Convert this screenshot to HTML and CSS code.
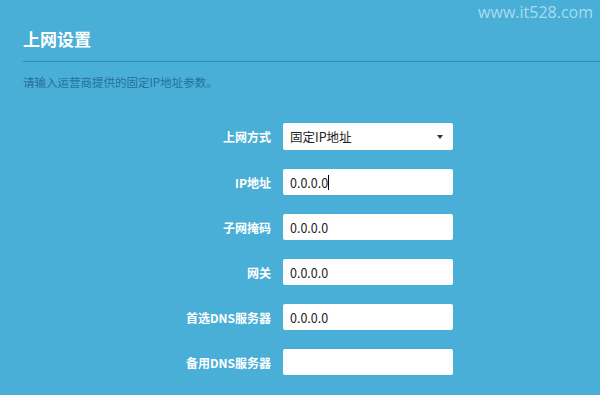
FILE: index.html
```html
<!DOCTYPE html>
<html lang="zh-CN">
<head>
	<title>上网设置</title>
	<meta charset="utf-8">
	<link rel="stylesheet" href="styles.css">
</head>
<body>
	<div class="watermark">www.it528.com</div>
	<div class="page">
		<h1 class="title">上网设置</h1>
		<div class="rule"></div>
		<p class="hint">请输入运营商提供的固定IP地址参数。</p>
		<div class="form">
			<label class="label">上网方式</label>
			<div class="select">
				<span>固定IP地址</span>
				<span class="arrow"></span>
			</div>
			<label class="label">IP地址</label>
			<div class="field">0.0.0.0<span class="caret"></span></div>
			<label class="label">子网掩码</label>
			<div class="field">0.0.0.0</div>
			<label class="label">网关</label>
			<div class="field">0.0.0.0</div>
			<label class="label">首选DNS服务器</label>
			<div class="field">0.0.0.0</div>
			<label class="label">备用DNS服务器</label>
			<div class="field"></div>
		</div>
	</div>
</body>
</html>
```

FILE: styles.css
```css
* {
	box-sizing: border-box;
}

html, body {
	margin: 0;
	padding: 0;
	height: 100%;
	background-color: #4aafd7;
	font-family: "Noto Sans CJK SC", "Noto Sans", sans-serif;
	overflow: hidden;
}

.watermark {
	position: absolute;
	top: 1px;
	right: 7px;
	font-family: "Open Sans", "Noto Sans", sans-serif;
	font-size: 16px;
	color: #a6dcf0;
}

.page {
	padding: 27px 0 0 23px;
}

.title {
	margin: 0;
	font-size: 17px;
	line-height: 24px;
	font-weight: bold;
	color: #ffffff;
}

.rule {
	margin-top: 10px;
	height: 1px;
	background-color: #2b8cb6;
}

.hint {
	margin: 12px 0 0;
	font-size: 11.5px;
	line-height: 16px;
	color: #27709a;
}

.form {
	display: grid;
	grid-template-columns: 248px 170px;
	column-gap: 12px;
	row-gap: 19px;
	margin-top: 33px;
	align-items: center;
}

.label {
	text-align: right;
	font-size: 12px;
	font-weight: bold;
	color: #ffffff;
}

.select, .field {
	height: 26px;
	background-color: #ffffff;
	border-radius: 2px;
	font-size: 12.5px;
	color: #222222;
	padding: 0 7px;
	display: flex;
	align-items: center;
}

.select {
	height: 27px;
	justify-content: space-between;
	padding-right: 10px;
}

.arrow {
	width: 0;
	height: 0;
	border-left: 3.5px solid transparent;
	border-right: 3.5px solid transparent;
	border-top: 4px solid #333333;
}

.caret {
	display: inline-block;
	width: 1px;
	height: 15px;
	background-color: #000000;
}
```
